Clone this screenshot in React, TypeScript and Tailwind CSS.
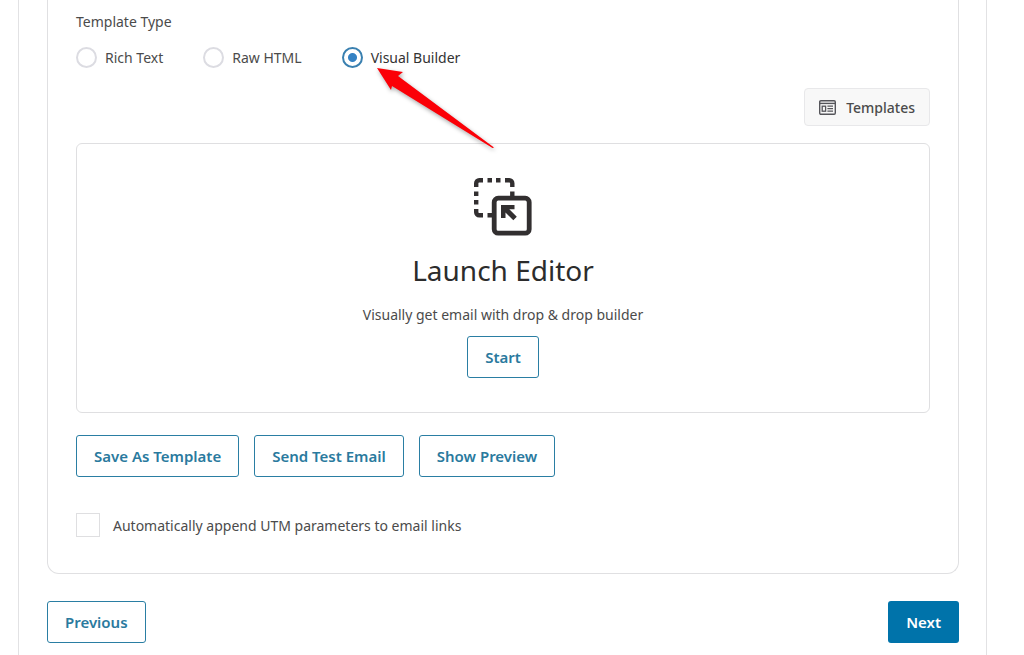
import React, { useState } from "react";

const types = [
  { id: "rich", label: "Rich Text" },
  { id: "raw", label: "Raw HTML" },
  { id: "visual", label: "Visual Builder" },
];

const outline =
  "h-[42px] rounded-[3px] border border-[#2a7ea3] bg-white px-[17px] pt-0.5 text-[15px] font-semibold text-[#2a7a9e]";

const TemplatesIcon = () => (
  <svg width="17" height="15" viewBox="0 0 17 15" fill="none" stroke="#55555a" aria-hidden="true">
    <rect x="0.7" y="0.7" width="15.6" height="13.6" rx="1.2" strokeWidth="1.4" />
    <path d="M1 3.4h15" strokeWidth="1.4" />
    <rect x="3.2" y="6.2" width="3.4" height="5" strokeWidth="1.3" />
    <path d="M8.4 6.2h5.6M8.4 8.7h5.6M8.4 11.2h5.6" strokeWidth="1.3" />
  </svg>
);

const LaunchIcon = () => (
  <svg width="58" height="58" viewBox="0 0 58 58" fill="none" stroke="#322f30" aria-hidden="true">
    <g strokeWidth="4.4">
      <path d="M2.2 9V5.2a3 3 0 0 1 3-3H9" />
      <path d="M13.5 2.2H18M22 2.2h4.5" />
      <path d="M31 2.2h4.3a3 3 0 0 1 3 3V9" />
      <path d="M2.2 13.5V18M2.2 22v4.5" />
      <path d="M2.2 31v3.300a3 3 0 0 0 3 3H9" />
      <path d="M13.5 37.3H18M38.3 13.5V18" />
    </g>
    <rect x="20.2" y="20.2" width="35" height="35" rx="4" strokeWidth="4.8" />
    <path d="M27 40V27h13.500v4.200h-5.200l7.500 7.500-3.500 3.500-7.800-7.700V40z" fill="#322f30" stroke="none" />
  </svg>
);

const Pointer = () => (
  <svg
    className="pointer-events-none absolute top-[21px] left-[33px] overflow-visible drop-shadow-[1px_2px_2px_rgba(0,0,0,0.35)]"
    width="120"
    height="82"
    viewBox="0 0 120 82"
    aria-hidden="true"
  >
    <path d="M2 1L28 5L23 9L119 80.500L117.500 81L17 19L16 23Z" fill="#fb0007" />
  </svg>
);

const App = () => {
  const [type, setType] = useState("visual");

  return (
    <main className="min-h-screen bg-white font-['Noto_Sans','Segoe_UI',sans-serif] text-sm text-[#4b4b4b]">
      <div className="mr-[37px] ml-[18px] min-h-screen border-x border-[#e2e2e4] pr-[27px] pb-3 pl-7">
        <section className="rounded-b-xl border border-t-0 border-[#e0e0e2] px-7 pt-3 pb-9">
          <fieldset>
            <legend className="h-[34px] leading-5">Template Type</legend>
            <div className="flex flex-wrap gap-10">
              {types.map((t) => (
                <label key={t.id} className="relative flex h-[22px] items-center gap-2">
                  <input
                    type="radio"
                    name="type"
                    value={t.id}
                    checked={type === t.id}
                    onChange={() => setType(t.id)}
                    className="size-[21px] appearance-none rounded-full border-2 border-[#dcdce2] bg-white checked:border-[#3a80b0] checked:bg-[radial-gradient(circle,#3582c4_4px,#fff_5px)]"
                  />
                  <span className={type === t.id ? "pt-0.5 text-[#333]" : "pt-0.5"}>{t.label}</span>
                  {t.id === "visual" && <Pointer />}
                </label>
              ))}
            </div>
          </fieldset>

          <div className="mt-5 flex justify-end">
            <button
              type="button"
              className="flex h-[38px] items-center gap-2.5 rounded-[4px] border border-[#e8e8ea] bg-[#f8f8f8] px-[14px] text-sm font-medium"
            >
              <TemplatesIcon />
              <span className="pt-0.5">Templates</span>
            </button>
          </div>

          <div className="mt-[17px] flex h-[270px] flex-col items-center rounded-md border border-[#dfdfe1] pt-[34px]">
            <LaunchIcon />
            <h2 className="mt-[14px] text-[28px] leading-10 text-[#2c2c2c]">Launch Editor</h2>
            <p className="mt-[15px] leading-5">Visually get email with drop &amp; drop builder</p>
            <button type="button" className={`${outline} mt-[11px]`}>
              Start
            </button>
          </div>

          <div className="mt-[22px] flex flex-wrap gap-[15px]">
            <button type="button" className={outline}>Save As Template</button>
            <button type="button" className={outline}>Send Test Email</button>
            <button type="button" className={outline}>Show Preview</button>
          </div>

          <label className="mt-9 flex items-center gap-[13px]">
            <input type="checkbox" className="size-6 appearance-none border border-[#dfdfe1] bg-white checked:bg-[#3582c4]" />
            <span className="pt-0.5">Automatically append UTM parameters to email links</span>
          </label>
        </section>

        <div className="mt-[27px] flex justify-between">
          <button type="button" className={outline}>Previous</button>
          <button
            type="button"
            className="h-[42px] rounded-[3px] bg-[#0073aa] px-[18px] pt-0.5 text-[15px] font-semibold text-white"
          >
            Next
          </button>
        </div>
      </div>
    </main>
  );
};

export default App;
